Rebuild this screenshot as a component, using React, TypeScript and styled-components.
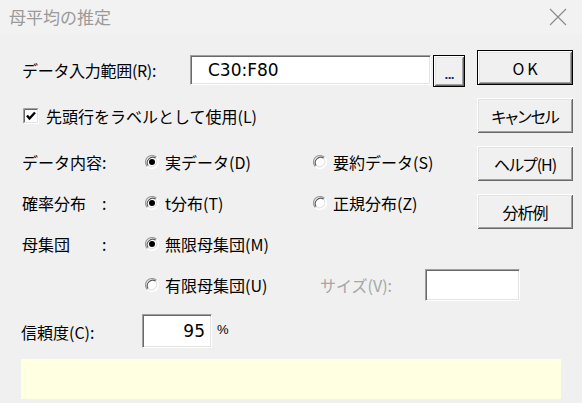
import React from "react";
import styled, { createGlobalStyle } from "styled-components";

const GlobalStyle = createGlobalStyle`
  html, body { margin: 0; padding: 0; background: #f0f0f0; }
  body { font-family: "Noto Sans CJK JP", "Noto Sans", sans-serif; color: #000; }
`;

const Window = styled.div`
  width: 582px;
  height: 403px;
  background: #f0f0f0;
  display: flex;
  flex-direction: column;
  overflow: hidden;
`;

const TitleBar = styled.div`
  height: 34px;
  flex: none;
  display: flex;
  align-items: center;
  justify-content: space-between;
  padding: 0 15px 0 9px;
  background: #f2f2f2;
`;

const TitleText = styled.div`
  font-size: 17px;
  line-height: 20px;
  color: #9a9a9a;
  margin-top: -1px;
`;

const Body = styled.div`
  display: flex;
  flex-direction: column;
  padding: 0 9px 0 21px;
`;

const Top = styled.div`
  display: flex;
  justify-content: space-between;
`;

const Form = styled.div`
  flex: 1;
  min-width: 0;
  display: flex;
  flex-direction: column;
`;

const ButtonColumn = styled.div`
  flex: none;
  display: flex;
  flex-direction: column;
  gap: 13px;
  padding-top: 16px;
  width: 96px;
`;

const Button = styled.button<{ $default?: boolean }>`
  box-sizing: border-box;
  width: 96px;
  height: 35px;
  margin: 0;
  padding: 0;
  background: #f0f0f0;
  border: ${(p) => (p.$default ? "1px solid #000" : "none")};
  box-shadow: inset 1px 1px #fff, inset -1px -1px #696969, inset 2px 2px #e3e3e3,
    inset -2px -2px #a0a0a0;
  font-family: "Noto Sans CJK JP", sans-serif;
  font-size: 16px;
  line-height: 20px;
  color: #000;
  font-feature-settings: "palt";
  white-space: nowrap;
`;

const OkText = styled.span`
  letter-spacing: 3px;
  margin-left: 3px;
`;

const NarrowText = styled.span<{ $spacing: number }>`
  letter-spacing: ${(p) => p.$spacing}px;
`;

const InputRow = styled.div`
  margin-top: 21px;
  height: 32px;
  display: flex;
  align-items: flex-start;
`;

const FieldLabel = styled.div<{ $width: number }>`
  width: ${(p) => p.$width}px;
  flex: none;
  font-size: 16px;
  line-height: 30px;
  padding-left: 1px;
  box-sizing: border-box;
  white-space: nowrap;
  letter-spacing: -0.3px;
`;

const Sunken = styled.div<{ $w: number; $h: number; $align?: string; $pad?: number }>`
  box-sizing: border-box;
  width: ${(p) => p.$w}px;
  height: ${(p) => p.$h}px;
  flex: none;
  background: #fff;
  border: 1px solid;
  border-color: #a0a0a0 #fff #fff #a0a0a0;
  box-shadow: inset 1px 1px #696969, inset -1px -1px #e3e3e3;
  display: flex;
  align-items: center;
  justify-content: ${(p) => p.$align || "flex-start"};
  padding: 0 ${(p) => (p.$align === "flex-end" ? p.$pad ?? 5 : 0)}px 0
    ${(p) => (p.$align === "flex-end" ? 0 : p.$pad ?? 0)}px;
  font-family: "DejaVu Sans", Verdana, sans-serif;
  font-size: 17px;
  color: #000;
`;

const BrowseButton = styled.button`
  box-sizing: border-box;
  flex: none;
  width: 32px;
  height: 32px;
  margin: 0 0 0 2px;
  padding: 10px 0 0 0;
  background: #f0f0f0;
  border: 1px solid #000;
  box-shadow: inset 1px 1px #fff, inset -1px -1px #696969, inset 2px 2px #e3e3e3,
    inset -2px -2px #a0a0a0;
  font-family: "DejaVu Sans", sans-serif;
  font-weight: bold;
  font-size: 11px;
  line-height: 12px;
  letter-spacing: -1px;
  color: #1a2a6a;
`;

const CheckRow = styled.label`
  margin-top: 19px;
  height: 20px;
  display: flex;
  align-items: center;
  gap: 7px;
  padding-left: 2px;
  font-size: 16px;
  line-height: 20px;
  white-space: nowrap;
`;

const OptionGrid = styled.div`
  margin-top: 15px;
  display: grid;
  grid-template-columns: 124px 168px 1fr;
  grid-auto-rows: 41px;
  align-items: center;
  font-size: 16px;
  line-height: 20px;
`;

const GroupLabel = styled.div`
  padding-left: 1px;
  white-space: nowrap;
`;

const RadioOption = styled.div<{ $col: number }>`
  grid-column: ${(p) => p.$col};
  display: flex;
  align-items: center;
  gap: 6px;
  white-space: nowrap;
`;

const SizeField = styled.div`
  grid-column: 3;
  display: flex;
  align-items: center;
  padding-left: 7px;
`;

const DisabledLabel = styled.span`
  flex: none;
  width: 105px;
  color: #a6a6a6;
  white-space: nowrap;
`;

const ConfidenceRow = styled.div`
  margin-top: 9px;
  height: 34px;
  display: flex;
  align-items: center;
`;

const ConfLabel = styled.div`
  width: 121px;
  font-size: 16px;
  line-height: 20px;
  margin-top: 2px;
`;

const Percent = styled.span`
  margin-left: 5px;
  margin-top: -4px;
  font-family: "Liberation Sans Narrow", "Liberation Sans", sans-serif;
  font-size: 13px;
`;

const InfoBar = styled.div`
  margin-top: 11px;
  height: 40px;
  width: 540px;
  background: #ffffe1;
`;

const Radio = ({ checked }: { checked?: boolean }) => (
  <svg width="14" height="14" viewBox="0 0 14 14" style={{ flex: "none" }}>
    <circle cx="7" cy="7" r="6" fill="#fff" />
    <path d="M2.4 11.6 A6.5 6.5 0 0 1 11.6 2.4" fill="none" stroke="#9a9a9a" strokeWidth="1.2" />
    <path d="M11.6 2.4 A6.5 6.5 0 0 1 2.4 11.6" fill="none" stroke="#ffffff" strokeWidth="1.2" />
    <path d="M3.3 10.7 A5.3 5.3 0 0 1 10.7 3.3" fill="none" stroke="#5a5a5a" strokeWidth="1.1" />
    <path d="M10.7 3.3 A5.3 5.3 0 0 1 3.3 10.7" fill="none" stroke="#e3e3e3" strokeWidth="1.1" />
    {checked && <circle cx="7" cy="7" r="3" fill="#000" />}
  </svg>
);

const CheckBox = () => (
  <svg width="16" height="16" viewBox="0 0 16 16" style={{ flex: "none" }}>
    <rect x="0" y="0" width="16" height="16" fill="#fff" />
    <path d="M0.5 15.5 V0.5 H15.5" fill="none" stroke="#a0a0a0" />
    <path d="M1.5 14.5 V1.5 H14.5" fill="none" stroke="#696969" />
    <path d="M15.5 0.5 V15.5 H0.5" fill="none" stroke="#fff" />
    <path d="M14.5 1.5 V14.5 H1.5" fill="none" stroke="#e3e3e3" />
    <path d="M4 7.5 L6.5 10.5 L12 4.5" fill="none" stroke="#000" strokeWidth="2.4" />
  </svg>
);

const CloseIcon = () => (
  <svg width="18" height="18" viewBox="0 0 18 18">
    <path d="M1 1 L17 17 M17 1 L1 17" stroke="#8a8a8a" strokeWidth="1.1" />
  </svg>
);

export default function App() {
  return (
    <>
      <GlobalStyle />
      <Window>
        <TitleBar>
          <TitleText>母平均の推定</TitleText>
          <CloseIcon />
        </TitleBar>
        <Body>
          <Top>
            <Form>
              <InputRow>
                <FieldLabel $width={169}>データ入力範囲(R):</FieldLabel>
                <Sunken $w={241} $h={30} $pad={17}>C30:F80</Sunken>
                <BrowseButton>...</BrowseButton>
              </InputRow>
              <CheckRow>
                <CheckBox />
                <span>先頭行をラベルとして使用(L)</span>
              </CheckRow>
              <OptionGrid>
                <GroupLabel>データ内容:</GroupLabel>
                <RadioOption $col={2}>
                  <Radio checked />
                  <span>実データ(D)</span>
                </RadioOption>
                <RadioOption $col={3}>
                  <Radio />
                  <span>要約データ(S)</span>
                </RadioOption>

                <GroupLabel>確率分布　:</GroupLabel>
                <RadioOption $col={2}>
                  <Radio checked />
                  <span>t分布(T)</span>
                </RadioOption>
                <RadioOption $col={3}>
                  <Radio />
                  <span>正規分布(Z)</span>
                </RadioOption>

                <GroupLabel>母集団　　:</GroupLabel>
                <RadioOption $col={2}>
                  <Radio checked />
                  <span>無限母集団(M)</span>
                </RadioOption>
                <span />

                <RadioOption $col={2}>
                  <Radio />
                  <span>有限母集団(U)</span>
                </RadioOption>
                <SizeField>
                  <DisabledLabel>サイズ(V):</DisabledLabel>
                  <Sunken $w={95} $h={32} />
                </SizeField>
              </OptionGrid>
            </Form>
            <ButtonColumn>
              <Button $default>
                <OkText>OK</OkText>
              </Button>
              <Button>
                <NarrowText $spacing={-1}>キャンセル</NarrowText>
              </Button>
              <Button>
                <NarrowText $spacing={-1}>ヘルプ(H)</NarrowText>
              </Button>
              <Button>
                <NarrowText $spacing={-1}>分析例</NarrowText>
              </Button>
            </ButtonColumn>
          </Top>
          <ConfidenceRow>
            <ConfLabel>信頼度(C):</ConfLabel>
            <Sunken $w={70} $h={34} $align="flex-end" $pad={6}>95</Sunken>
            <Percent>%</Percent>
          </ConfidenceRow>
          <InfoBar />
        </Body>
      </Window>
    </>
  );
}
